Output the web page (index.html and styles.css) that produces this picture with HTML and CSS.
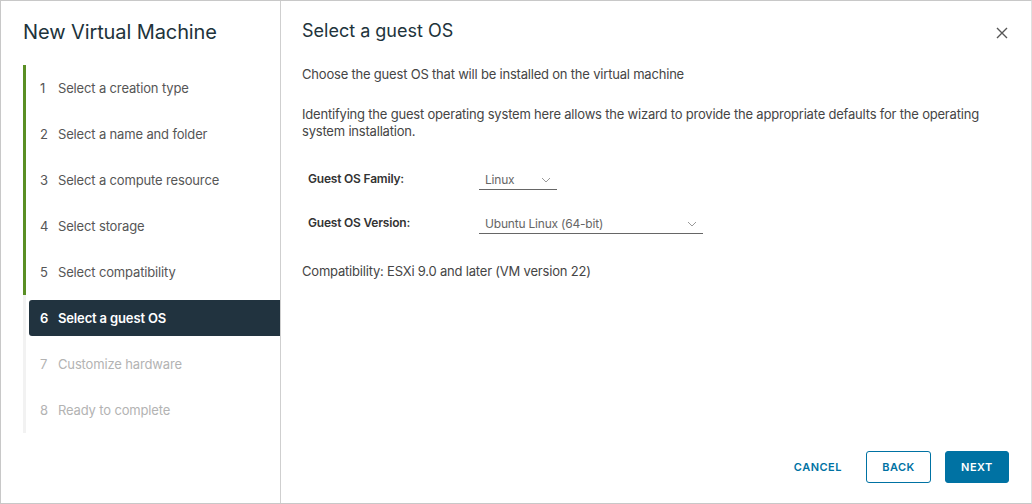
FILE: index.html
```html
<!DOCTYPE html>
<html lang="en">
<head>
    <meta charset="UTF-8">
    <meta name="viewport" content="width=device-width, initial-scale=1.0">
    <title>New Virtual Machine</title>
    <link rel="stylesheet" href="styles.css">
</head>
<body>
    <div class="modal">
        <div class="sidebar">
            <h2 class="wizard-title">New Virtual Machine</h2>
            <ol class="steps">
                <li class="step done"><span class="num">1</span>Select a creation type</li>
                <li class="step done"><span class="num">2</span>Select a name and folder</li>
                <li class="step done"><span class="num">3</span>Select a compute resource</li>
                <li class="step done"><span class="num">4</span>Select storage</li>
                <li class="step done"><span class="num">5</span>Select compatibility</li>
                <li class="step active"><div class="step-box"><span class="num">6</span>Select a guest OS</div></li>
                <li class="step todo"><span class="num">7</span>Customize hardware</li>
                <li class="step todo"><span class="num">8</span>Ready to complete</li>
            </ol>
        </div>

        <div class="content">
            <div class="content-header">
                <h3 class="page-title">Select a guest OS</h3>
                <button class="close" aria-label="Close">
                    <svg width="12" height="12" viewBox="0 0 12 12">
                        <path d="M1 1 L11 11 M11 1 L1 11" stroke="#565656" stroke-width="1.4" fill="none"/>
                    </svg>
                </button>
            </div>

            <div class="content-body">
                <p class="lead">Choose the guest OS that will be installed on the virtual machine</p>
                <p class="desc">Identifying the guest operating system here allows the wizard to provide the appropriate defaults for the operating system installation.</p>

                <div class="form-row">
                    <label class="form-label">Guest OS Family:</label>
                    <div class="select small">
                        <span>Linux</span>
                        <svg width="10" height="6" viewBox="0 0 10 6"><path d="M1 1 L5 5 L9 1" stroke="#9a9a9a" stroke-width="1" fill="none"/></svg>
                    </div>
                </div>
                <div class="form-row">
                    <label class="form-label">Guest OS Version:</label>
                    <div class="select wide">
                        <span>Ubuntu Linux (64-bit)</span>
                        <svg width="10" height="6" viewBox="0 0 10 6"><path d="M1 1 L5 5 L9 1" stroke="#9a9a9a" stroke-width="1" fill="none"/></svg>
                    </div>
                </div>

                <p class="compat">Compatibility: ESXi 9.0 and later (VM version 22)</p>
            </div>

            <div class="footer">
                <button class="btn btn-link">CANCEL</button>
                <button class="btn btn-outline">BACK</button>
                <button class="btn btn-primary">NEXT</button>
            </div>
        </div>
    </div>
</body>
</html>
```

FILE: styles.css
```css
* {
    box-sizing: border-box;
}

body {
    margin: 0;
    font-family: Inter, "Noto Sans", sans-serif;
    color: #333;
    background: #fff;
}

.modal {
    display: flex;
    width: 1032px;
    height: 504px;
    border: 1px solid #c8c8c8;
    border-right-color: #e0e0e0;
    background: #fff;
}

/* left wizard nav */
.sidebar {
    width: 280px;
    flex-shrink: 0;
    border-right: 1px solid #cfcfcf;
    padding: 19px 0 0 22px;
}

.wizard-title {
    margin: 0 0 21px 0;
    font-size: 20px;
    font-weight: 400;
    color: #21333b;
    line-height: 24px;
    letter-spacing: -0.1px;
}

.steps {
    list-style: none;
    margin: 0;
    padding: 0;
}

.step {
    height: 46px;
    display: flex;
    align-items: center;
    font-size: 13px;
    letter-spacing: -0.15px;
    color: #565656;
    border-left: 3px solid #e8e8e8;
    padding-left: 14px;
}

.step.done {
    border-left-color: #5a8f24;
}

.step.todo {
    color: #b3b3b3;
    border-left-color: #f2f2f2;
}

.step.active {
    padding-left: 3px;
    border-left-color: #f2f2f2;
}

.step-box {
    flex: 1;
    height: 36px;
    display: flex;
    align-items: center;
    padding-left: 11px;
    background: #21333f;
    color: #fff;
    font-weight: 600;
    border-radius: 3px 0 0 3px;
}

.num {
    width: 18px;
    flex-shrink: 0;
}

/* right panel */
.content {
    flex: 1;
    display: flex;
    flex-direction: column;
    padding: 0 22px 20px 21px;
}

.content-header {
    display: flex;
    justify-content: space-between;
    align-items: flex-start;
    padding-top: 18px;
}

.page-title {
    margin: 0;
    font-size: 18px;
    font-weight: 400;
    color: #21333b;
    line-height: 24px;
}

.close {
    border: none;
    background: none;
    padding: 0;
    margin: 8px 1px 0 0;
    cursor: pointer;
}

.content-body {
    flex: 1;
    font-size: 13px;
    letter-spacing: -0.2px;
    color: #454545;
}

.lead {
    margin: 23px 0 0 0;
    line-height: 17px;
}

.desc {
    margin: 23px 0 0 0;
    line-height: 17px;
}

.form-row {
    display: flex;
    align-items: center;
    margin-top: 26px;
}

.form-row + .form-row {
    margin-top: 20px;
}

.form-label {
    width: 177px;
    padding-left: 6px;
    font-size: 12px;
    font-weight: 600;
    color: #333;
}

.select {
    display: flex;
    justify-content: space-between;
    align-items: center;
    height: 20px;
    padding: 0 6px 0 6px;
    margin-top: 4px;
    border-bottom: 1px solid #666;
    font-size: 12px;
    color: #666;
}

.select.small {
    width: 78px;
}

.select.wide {
    width: 224px;
}

.compat {
    margin: 29px 0 0 0;
    line-height: 17px;
}

.footer {
    display: flex;
    justify-content: flex-end;
    gap: 14px;
}

.btn {
    height: 32px;
    padding: 0 12px;
    font-family: inherit;
    font-size: 11px;
    font-weight: 600;
    letter-spacing: 0.5px;
    border-radius: 3px;
    cursor: pointer;
}

.btn-link {
    background: none;
    border: 1px solid transparent;
    color: #0072a3;
    margin-right: -3px;
}

.btn-outline {
    background: #fff;
    border: 1px solid #0072a3;
    color: #0072a3;
    width: 65px;
}

.btn-primary {
    background: #0072a3;
    border: 1px solid #0072a3;
    color: #fff;
    width: 64px;
}
```
